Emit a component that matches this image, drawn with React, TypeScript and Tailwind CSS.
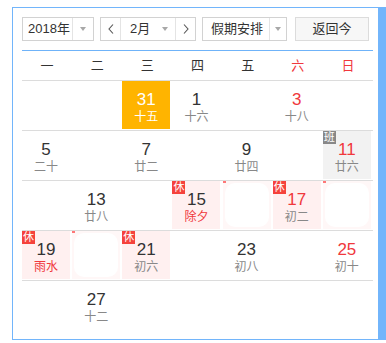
import React from "react";

type Cell = {
  num: string;
  lunar: string;
  numColor?: string;
  lunarColor?: string;
  bg?: "today" | "pink" | "gray";
  badge?: "休" | "班";
} | null | "ghost";

const rows: Cell[][] = [
  [null, null, { num: "31", lunar: "十五", bg: "today" }, { num: "1", lunar: "十六" }, null, { num: "3", lunar: "十八", numColor: "red" }, null],
  [{ num: "5", lunar: "二十" }, null, { num: "7", lunar: "廿二" }, null, { num: "9", lunar: "廿四" }, null, { num: "11", lunar: "廿六", numColor: "red", bg: "gray", badge: "班" }],
  [null, { num: "13", lunar: "廿八" }, null, { num: "15", lunar: "除夕", lunarColor: "red", bg: "pink", badge: "休" }, "ghost", { num: "17", lunar: "初二", numColor: "red", bg: "pink", badge: "休" }, "ghost"],
  [{ num: "19", lunar: "雨水", lunarColor: "red", bg: "pink", badge: "休" }, "ghost", { num: "21", lunar: "初六", bg: "pink", badge: "休" }, null, { num: "23", lunar: "初八" }, null, { num: "25", lunar: "初十", numColor: "red" }],
  [null, { num: "27", lunar: "十二" }, null, null, null, null, null],
];

function Arrow() {
  return <div className="w-0 h-0 border-l-[3px] border-r-[3px] border-t-[4px] border-l-transparent border-r-transparent border-t-[#a8a8a8]" />;
}

function Chevron({ dir }: { dir: "l" | "r" }) {
  return (
    <svg width="6" height="10" viewBox="0 0 6 10">
      <polyline
        points={dir === "l" ? "5,0.5 1,5 5,9.5" : "1,0.5 5,5 1,9.5"}
        fill="none"
        stroke="#555"
        strokeWidth="1.1"
      />
    </svg>
  );
}

function DayCell({ c }: { c: Cell }) {
  if (c === null) return <div className="h-[49px]" />;
  if (c === "ghost") {
    return (
      <div className="h-[49px]">
        <div className="relative w-[48px] h-[48px] bg-[#fff7f7]">
          <div className="absolute left-0 top-0 w-[3px] h-[2px] bg-[#f77]" />
          <div className="absolute inset-[2px] rounded-[10px] bg-white" />
        </div>
      </div>
    );
  }
  const bgCls =
    c.bg === "today" ? "bg-[#ffb400]" : c.bg === "pink" ? "bg-[#fff0f0]" : c.bg === "gray" ? "bg-[#f2f2f2]" : "";
  const numCls =
    c.bg === "today" ? "text-white" : c.numColor === "red" ? "text-[#f0383c]" : "text-[#333]";
  const lunarCls =
    c.bg === "today" ? "text-white" : c.lunarColor === "red" ? "text-[#f0383c]" : "text-[#888]";
  return (
    <div className="h-[49px]">
      <div className={`relative w-[48px] h-[48px] flex flex-col items-center ${bgCls}`}>
        {c.badge && (
          <div
            className={`absolute left-0 top-0 w-[13px] h-[13px] flex items-center justify-center text-[11px] leading-none text-white ${
              c.badge === "休" ? "bg-[#f5423c]" : "bg-[#888]"
            }`}
          >
            {c.badge}
          </div>
        )}
        <div className={`mt-[9px] text-[17px] leading-[20px] ${numCls}`}>{c.num}</div>
        <div className={`mt-[-1px] text-[12px] leading-[16px] ${lunarCls}`}>{c.lunar}</div>
      </div>
    </div>
  );
}

export default function App() {
  const week = ["一", "二", "三", "四", "五", "六", "日"];
  return (
    <div
      className="bg-white w-[386px] h-[343px] pt-[7px] pl-[12px]"
      style={{ fontFamily: '"Liberation Sans", "Noto Sans CJK SC", sans-serif' }}
    >
      <div className="box-border w-[374px] h-[333px] border-l border-t border-b border-r-[8px] border-[#72b5fb] pt-[9px] pl-[9px] pr-[5px]">
        {/* header */}
        <div className="flex h-[24px] text-[13px] text-[#333] whitespace-nowrap">
          <div className="w-[72px] h-[24px] flex border border-[#d2d2d2] bg-white">
            <div className="w-[49px] flex items-center pl-[5px]">2018年</div>
            <div className="flex-1 border-l border-[#e4e4e4] flex items-center justify-center">
              <Arrow />
            </div>
          </div>
          <div className="ml-[6px] w-[96px] h-[24px] flex border border-[#d2d2d2] bg-white">
            <div className="w-[20px] flex items-center justify-center border-r border-[#e4e4e4]">
              <Chevron dir="l" />
            </div>
            <div className="w-[54px] flex items-center">
              <span className="ml-[9px]">2月</span>
              <span className="ml-[12px]"><Arrow /></span>
            </div>
            <div className="flex-1 flex items-center justify-center border-l border-[#e4e4e4]">
              <Chevron dir="r" />
            </div>
          </div>
          <div className="ml-[6px] w-[85px] h-[24px] flex border border-[#d2d2d2] bg-white">
            <div className="w-[66px] flex items-center pl-[8px]">假期安排</div>
            <div className="flex-1 border-l border-[#e4e4e4] flex items-center justify-center">
              <Arrow />
            </div>
          </div>
          <div className="ml-[8px] w-[74px] h-[24px] flex items-center justify-center border border-[#dcdcdc] bg-[#f7f7f7]">
            返回今
          </div>
        </div>
        {/* blue line */}
        <div className="mt-[9px] h-[1px] bg-[#6fb3f9]" />
        {/* weekdays */}
        <div className="grid grid-cols-7 h-[29px] text-[13px]">
          {week.map((w, i) => (
            <div key={w} className={`flex items-center justify-center ${i >= 5 ? "text-[#f0383c]" : "text-[#333]"}`}>
              {w}
            </div>
          ))}
        </div>
        {rows.map((r, ri) => (
          <div key={ri} className="border-t border-[#dcdcdc] grid grid-cols-7">
            {r.map((c, ci) => (
              <DayCell key={ci} c={c} />
            ))}
          </div>
        ))}
      </div>
    </div>
  );
}
